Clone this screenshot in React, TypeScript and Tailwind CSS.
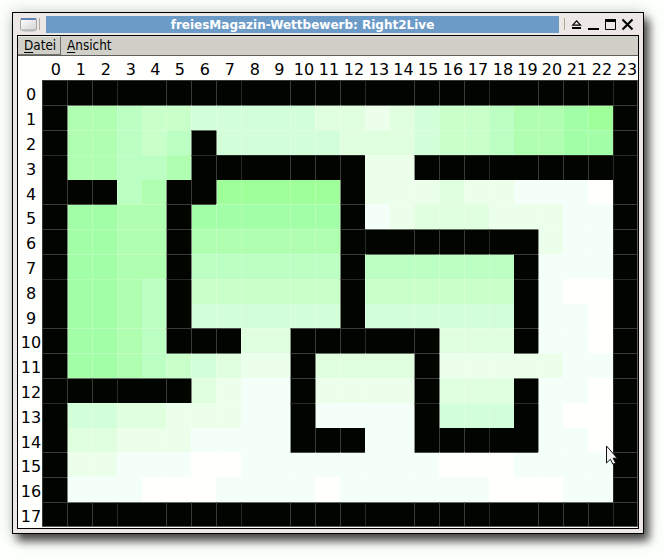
import React from "react";

// '#' is a wall; letters run from the strongest green (A) to white (J).
const MAP = [
  "########################",
  "#CCDEEFFFFFGGHGFEEDCCBA#",
  "#CCDED#FFFFFGGGFEEDCCBB#",
  "#CCDDC#######HH#########",
  "###DC##AAAAA#HHHGHHIIIJ#",
  "#BBCC#BBBBBB#IHGGGHHHII#",
  "#BBCC#CCCCCC########HII#",
  "#BBCC#DDDDDD#DDDDDD#III#",
  "#BBCD#EEEEEE#EEEEEE#IJJ#",
  "#BBCD#FFFFFF#FFFFFF#IIJ#",
  "#BBCD###GG######GGG#IIJ#",
  "#BBCDEFGHH#GGGG#HHHHHII#",
  "######GHII#HHHH#GGG#IIJ#",
  "#FFGGHHHII#IIII#FFF#IJJ#",
  "#GGHHHIIII###II#####IIJ#",
  "#HHIIIJJIIIIIIIIJJJIIII#",
  "#IIIJJJIIIIJIIIIIIJJJII#",
  "########################",
];

const FILL: Record<string, string> = {
  "#": "bg-[#020400]",
  A: "bg-[#9fff98]",
  B: "bg-[#a2ffa8]",
  C: "bg-[#b0ffb0]",
  D: "bg-[#bbffc2]",
  E: "bg-[#c9ffc8]",
  F: "bg-[#d2ffda]",
  G: "bg-[#dfffdf]",
  H: "bg-[#ebffea]",
  I: "bg-[#f4fffa]",
  J: "bg-[#fffffe]",
};

const LEFT = {
  none: "",
  dim: "border-l border-l-white/15",
  normal: "border-l border-l-white/22",
  edge: "border-l border-l-[#7a857a]",
  darkEdge: "border-l border-l-[#8b918b]",
};
const TOP = {
  none: "",
  dim: "border-t border-t-white/15",
  normal: "border-t border-t-white/22",
  edge: "border-t border-t-[#667066]",
  darkEdge: "border-t border-t-[#4c504c]",
};

function lineKind(index: number, own: string, before?: string): keyof typeof LEFT {
  const phase = index % 5;
  if (phase === 4) return "none";
  if (phase === 3) return "dim";
  if (before !== undefined && (own === "#") !== (before === "#")) {
    return phase === 0 ? "darkEdge" : "edge";
  }
  return "normal";
}

const span = (i: number, vertical: boolean) =>
  i % 5 === 4 ? (vertical ? "h-[24px]" : "w-[24px]") : vertical ? "h-[25px]" : "w-[25px]";

function TitleBar() {
  return (
    <div className="flex h-[22px] items-center">
      <svg className="ml-[3px] block shrink-0" width="18" height="15" viewBox="0 0 18 15">
        <defs>
          <linearGradient id="pane" x1="0" y1="0" x2="1" y2="1">
            <stop offset="0" stopColor="#fff" />
            <stop offset="1" stopColor="#d2d4d2" />
          </linearGradient>
        </defs>
        <ellipse cx="9" cy="13.5" rx="7" ry="1.3" fill="#c9c5c3" />
        <rect x="0.5" y="1.5" width="16" height="11.5" rx="1" fill="url(#pane)" stroke="#a5a8a4" />
        <rect x="1" y="1" width="15" height="2" fill="#5f83b6" />
      </svg>
      <div className="ml-[1px] h-[12px] w-px shrink-0 bg-[#b1aaa1]" />
      <div className="ml-[6px] flex h-[17px] w-[513px] shrink-0 items-center justify-center bg-[#6d9bc8] pt-[2px] text-[12px] leading-[17px] font-bold whitespace-nowrap text-white">
        freiesMagazin-Wettbewerb: Right2Live
      </div>
      <div className="ml-[5px] h-[12px] w-px shrink-0 bg-[#b1a994]" />
      <svg className="ml-[6px] block shrink-0" width="63" height="13" viewBox="0 0 63 13" fill="none" stroke="#000">
        <path d="M1.7 7.2h7.8L5.6 2.8z" strokeWidth="1.2" />
        <path d="M1 10h9" strokeWidth="2" />
        <path d="M17 11h11" strokeWidth="2" />
        <path d="M34.5 1.5h10v10h-10z" />
        <path d="M34 2.5h11" strokeWidth="3" />
        <path d="M51.5 1.5l10 10m0-10l-10 10" strokeWidth="2.1" />
      </svg>
    </div>
  );
}

function MenuBar() {
  return (
    <div className="flex h-[20px] border-b border-[#5e605c] bg-[#d0d0c9] font-['DejaVu_Sans_Condensed','DejaVu_Sans',sans-serif] text-[13.4px] leading-[19px] font-[stretch:condensed]">
      <div className="w-[43px] border-t border-r border-b border-t-[#e8e8e2] border-r-[#70716c] border-b-[#70716c] pl-[6px] leading-[18px]">
        <span className="underline underline-offset-2">D</span>atei
      </div>
      <div className="pl-[6px] leading-[20px]">
        <span className="underline underline-offset-2">A</span>nsicht
      </div>
    </div>
  );
}

function Board() {
  return (
    <div className="flex h-[472px] flex-col bg-[#fffffe] text-[16px] leading-[25px]">
      <div className="flex h-[24px] pl-[25.4px]">
        {MAP[0].split("").map((_, c) => (
          <div key={c} className={`flex shrink-0 justify-center ${span(c, false)}`}>
            <span className="shrink-0 leading-[27px]">{c}</span>
          </div>
        ))}
      </div>
      <div className="flex">
        <div className="w-[24px] shrink-0">
          {MAP.map((_, r) => (
            <div key={r} className={`flex justify-center pl-[2px] leading-[29px] ${span(r, true)}`}>
              {r}
            </div>
          ))}
        </div>
        <div className="h-[447px] w-[596px] shrink-0 overflow-hidden border-r border-b border-[#555a55]">
          {MAP.map((row, r) => (
            <div key={r} className={`flex ${span(r, true)}`}>
              {row.split("").map((cell, c) => (
                <div
                  key={c}
                  className={`h-full shrink-0 ${span(c, false)} ${FILL[cell]} ${
                    LEFT[lineKind(c, cell, row[c - 1])]
                  } ${TOP[lineKind(r, cell, MAP[r - 1]?.[c])]}`}
                />
              ))}
            </div>
          ))}
        </div>
      </div>
    </div>
  );
}

export default function App() {
  return (
    <main className="relative h-[559px] w-[669px] overflow-hidden bg-[#fdfffc] pt-[12px] pl-[12px] font-['DejaVu_Sans',sans-serif] text-black">
      <section className="h-[522px] w-[632px] border border-black bg-[#ede8e5] px-[4px] shadow-[5px_7px_9px_0px_rgba(0,0,0,0.7),0_0_14px_rgba(0,0,0,0.18)]">
        <TitleBar />
        <div className="h-[494px] w-[622px] overflow-hidden border border-black">
          <MenuBar />
          <Board />
        </div>
      </section>
      <svg className="absolute top-[444px] left-[605px]" width="13" height="22" viewBox="0 0 13 22">
        <path d="M1.5 2v17l3.8-3.7 2.6 5 2.7-1.4-2.5-4.7h4.2z" fill="#f4f4f4" stroke="#111" />
      </svg>
    </main>
  );
}
